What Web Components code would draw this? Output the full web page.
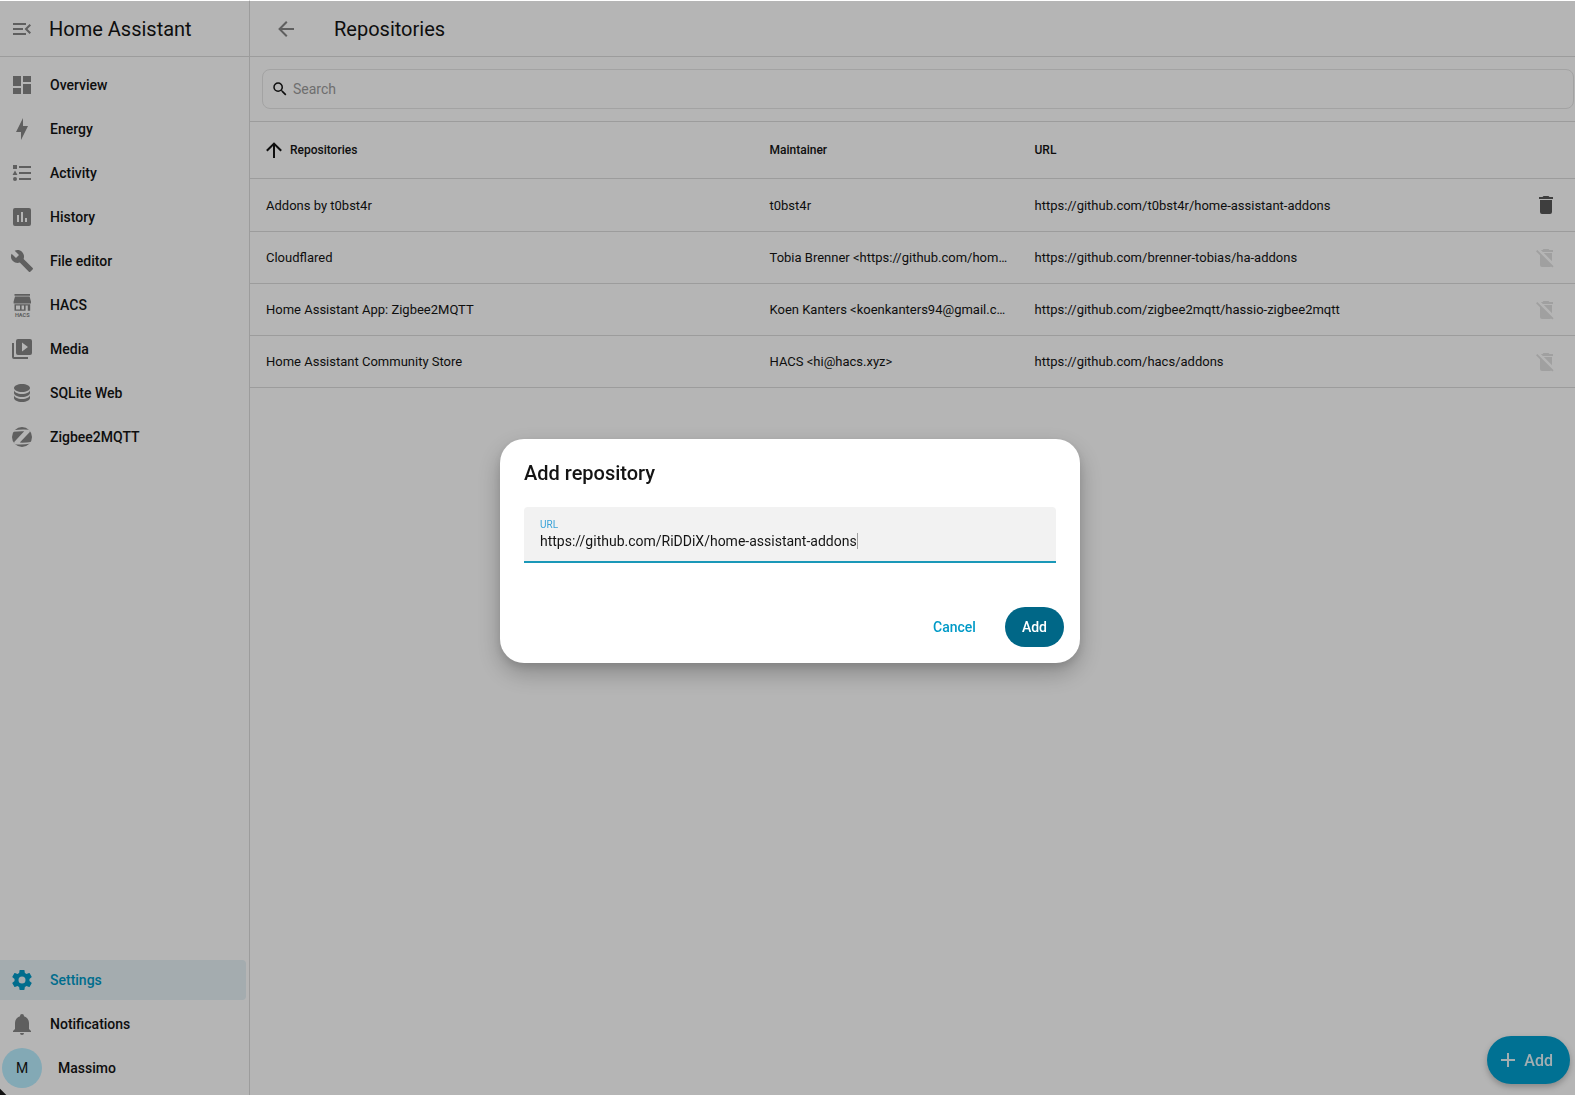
<!DOCTYPE html>
<html lang="en">
<head>
<meta charset="utf-8">
<title>Repositories</title>
<style>
  html, body {
    height: 100%;
    margin: 0;
  }
  body {
    background: #fff;
    font-family: Roboto, "Open Sans", sans-serif;
    font-size: 14px;
    color: #141414;
    --primary: #009ac7;
    --icon: #868686;
    --divider: #dcdcdc;
  }
</style>
</head>
<body>
<ha-app></ha-app>

<script>
"use strict";

const ICONS = {
  menuOpen: `<path d="M21,15.61L19.59,17L14.58,12L19.59,7L21,8.39L17.44,12L21,15.61M3,6H16V8H3V6M3,13V11H13V13H3M3,18V16H16V18H3Z"/>`,
  dashboard: `<path d="M13,3V9H21V3M13,21H21V11H13M3,21H11V15H3M3,13H11V3H3V13Z"/>`,
  bolt: `<path d="M11 15H6L13 1V9H18L11 23V15Z"/>`,
  list: `<path d="M5,9.5L7.5,14H2.5L5,9.5M3,4H7V8H3V4M5,20A2,2 0 0,0 7,18A2,2 0 0,0 5,16A2,2 0 0,0 3,18A2,2 0 0,0 5,20M9,5V7H21V5H9M9,19H21V17H9V19M9,13H21V11H9V13Z"/>`,
  chart: `<path d="M19,3H5A2,2 0 0,0 3,5V19A2,2 0 0,0 5,21H19A2,2 0 0,0 21,19V5A2,2 0 0,0 19,3M9,17H7V10H9V17M13,17H11V7H13V17M17,17H15V13H17V17Z"/>`,
  wrench: `<path d="M22.7,19L13.6,9.9C14.5,7.6 14,4.9 12.1,3C10.1,1 7.1,0.6 4.7,1.7L9,6L6,9L1.6,4.7C0.4,7.1 0.9,10.1 2.9,12.1C4.8,14 7.5,14.5 9.8,13.6L18.9,22.7C19.3,23.1 19.9,23.1 20.3,22.7L22.6,20.4C23.1,20 23.1,19.3 22.7,19Z"/>`,
  hacs: `<path fill-rule="evenodd" d="M4.5,1H20V2.8H4.5ZM5,3.5H19.6L21,8.4V10.6H3.6V8.4ZM4.5,11.2H20.2V17.8H17.8V12.6H15.6V17.8H4.5ZM6,12.6V16.4H10V12.6ZM11.6,12.6V16.4H14V12.6Z"/><text x="12.3" y="23.8" font-size="5.6" font-weight="700" text-anchor="middle">HACS</text>`,
  media: `<path d="M4,6H2V20A2,2 0 0,0 4,22H18V20H4V6M20,2A2,2 0 0,1 22,4V16A2,2 0 0,1 20,18H8A2,2 0 0,1 6,16V4A2,2 0 0,1 8,2H20M12,14.5L18,10L12,5.5V14.5Z"/>`,
  database: `<path d="M12,3C7.58,3 4,4.79 4,7C4,9.21 7.58,11 12,11C16.42,11 20,9.21 20,7C20,4.79 16.42,3 12,3M4,9V12C4,14.21 7.58,16 12,16C16.42,16 20,14.21 20,12V9C20,11.21 16.42,13 12,13C7.58,13 4,11.21 4,9M4,14V17C4,19.21 7.58,21 12,21C16.42,21 20,19.21 20,17V14C20,16.21 16.42,18 12,18C7.58,18 4,16.21 4,14Z"/>`,
  zigbee: `<mask id="z"><rect width="24" height="24" fill="#fff"/><path fill="#000" d="M3,5.2Q12,4 19.8,4.8V7L9.8,17.6Q16,17.8 21,17V18.6Q12,20 4.2,19.2V16.9L14.2,6.2Q8,6 3,6.8Z"/></mask><circle cx="12" cy="12" r="10" mask="url(#z)"/>`,
  cog: `<path d="M12,15.5A3.5,3.5 0 0,1 8.5,12A3.5,3.5 0 0,1 12,8.5A3.5,3.5 0 0,1 15.5,12A3.5,3.5 0 0,1 12,15.5M19.43,12.97C19.47,12.65 19.5,12.33 19.5,12C19.5,11.67 19.47,11.34 19.43,11L21.54,9.37C21.73,9.22 21.78,8.95 21.66,8.73L19.66,5.27C19.54,5.05 19.27,4.96 19.05,5.05L16.56,6.05C16.04,5.66 15.5,5.32 14.87,5.07L14.5,2.42C14.46,2.18 14.25,2 14,2H10C9.75,2 9.54,2.18 9.5,2.42L9.13,5.07C8.5,5.32 7.96,5.66 7.44,6.05L4.95,5.05C4.73,4.96 4.46,5.05 4.34,5.27L2.34,8.73C2.21,8.95 2.27,9.22 2.46,9.37L4.57,11C4.53,11.34 4.5,11.67 4.5,12C4.5,12.33 4.53,12.65 4.57,12.97L2.46,14.63C2.27,14.78 2.21,15.05 2.34,15.27L4.34,18.73C4.46,18.95 4.73,19.03 4.95,18.95L7.44,17.94C7.96,18.34 8.5,18.68 9.13,18.93L9.5,21.58C9.54,21.82 9.75,22 10,22H14C14.25,22 14.46,21.82 14.5,21.58L14.87,18.93C15.5,18.67 16.04,18.34 16.56,17.94L19.05,18.95C19.27,19.03 19.54,18.95 19.66,18.73L21.66,15.27C21.78,15.05 21.73,14.78 21.54,14.63L19.43,12.97Z"/>`,
  bell: `<path d="M21,19V20H3V19L5,17V11C5,7.9 7.03,5.17 10,4.29C10,4.19 10,4.1 10,4A2,2 0 0,1 12,2A2,2 0 0,1 14,4C14,4.1 14,4.19 14,4.29C16.97,5.17 19,7.9 19,11V17L21,19M14,21A2,2 0 0,1 12,23A2,2 0 0,1 10,21"/>`,
  arrowLeft: `<path d="M20,11V13H8L13.5,18.5L12.08,19.92L4.16,12L12.08,4.08L13.5,5.5L8,11H20Z"/>`,
  arrowUp: `<path d="M13,20H11V8L5.5,13.5L4.08,12.08L12,4.16L19.92,12.08L18.5,13.5L13,8V20Z"/>`,
  magnify: `<path d="M9.5,3A6.5,6.5 0 0,1 16,9.5C16,11.11 15.41,12.59 14.44,13.73L14.71,14H15.5L20.5,19L19,20.5L14,15.5V14.71L13.73,14.44C12.59,15.41 11.11,16 9.5,16A6.5,6.5 0 0,1 3,9.5A6.5,6.5 0 0,1 9.5,3M9.5,5C7,5 5,7 5,9.5C5,12 7,14 9.5,14C12,14 14,12 14,9.5C14,7 12,5 9.5,5Z"/>`,
  trash: `<path d="M19,4H15.5L14.5,3H9.5L8.5,4H5V6H19M6,19A2,2 0 0,0 8,21H16A2,2 0 0,0 18,19V7H6V19Z"/>`,
  trashOff: `<path d="M19,6V4H15.5L14.5,3H9.5L8.5,4H6.8L8.8,6H19M18,7H9.8L18,15.2V7M3.3,4L2,5.3L6,9.3V19A2,2 0 0,0 8,21H16C16.5,21 16.9,20.8 17.2,20.5L18.3,21.6L19.6,20.3L3.3,4Z"/>`,
  plus: `<path d="M19,13H13V19H11V13H5V11H11V5H13V11H19V13Z"/>`,
};

// Attaches an open shadow root filled with the given markup
const render = (element, html) => {
  const template = document.createElement("template");
  template.innerHTML = html;
  const root = element.attachShadow({ mode: "open" });
  root.appendChild(template.content.cloneNode(true));
  return root;
};

customElements.define(
  "ha-icon",
  class Icon extends HTMLElement {
    connectedCallback() {
      if (this.shadowRoot) return;
      render(this, `
      <style>
      :host {
        display: block;
        flex: none;
        width: var(--icon-size, 24px);
        height: var(--icon-size, 24px);
      }
      svg {
        display: block;
        width: 100%;
        height: 100%;
        fill: currentColor;
      }
      </style>
      <svg viewBox="0 0 24 24" aria-hidden="true">${ICONS[this.getAttribute("name")]}</svg>`);
    }
  }
);

customElements.define(
  "ha-sidebar-item",
  class SidebarItem extends HTMLElement {
    constructor() {
      super();
      render(this, `
      <style>
      :host {
        display: block;
      }
      a {
        display: flex;
        align-items: center;
        gap: 16px;
        height: 40px;
        padding-left: 10px;
        border-radius: 0 4px 4px 0;
        color: inherit;
        font-weight: 500;
        text-decoration: none;
      }
      ::slotted(ha-icon) {
        color: var(--icon);
      }
      :host([selected]) a {
        background: #e7f2f7;
        color: var(--primary);
      }
      :host([selected]) ::slotted(ha-icon) {
        color: var(--primary);
      }
      :host([user]) a {
        padding-left: 2px;
      }
      </style>
      <a href="#"><slot name="start"></slot><slot></slot></a>`);
    }
  }
);

customElements.define(
  "ha-avatar",
  class Avatar extends HTMLElement {
    constructor() {
      super();
      render(this, `
      <style>
      :host {
        display: flex;
        align-items: center;
        justify-content: center;
        width: 40px;
        height: 40px;
        border-radius: 50%;
        background: #b9eeff;
        font-weight: 400;
      }
      </style>
      <slot></slot>`);
    }
  }
);

customElements.define(
  "ha-sidebar",
  class Sidebar extends HTMLElement {
    constructor() {
      super();
      const items = [
        ["dashboard", "Overview"],
        ["bolt", "Energy"],
        ["list", "Activity"],
        ["chart", "History"],
        ["wrench", "File editor"],
        ["hacs", "HACS"],
        ["media", "Media"],
        ["database", "SQLite Web"],
        ["zigbee", "Zigbee2MQTT"],
      ];
      render(this, `
      <style>
      :host {
        display: flex;
        flex-direction: column;
        flex: none;
        box-sizing: border-box;
        width: 250px;
        border-right: 1px solid var(--divider);
      }
      header {
        display: flex;
        align-items: center;
        gap: 15px;
        box-sizing: border-box;
        height: 57px;
        padding: 2px 10px 0;
        border-bottom: 1px solid var(--divider);
        font-size: 20px;
      }
      button {
        padding: 0;
        border: 0;
        background: none;
        color: var(--icon);
      }
      nav {
        display: flex;
        flex: 1;
        flex-direction: column;
        gap: 4px;
        padding: 8px 3px 7px 0;
      }
      .spacer {
        flex: 1;
      }
      </style>
      <header>
        <button type="button" aria-label="Sidebar toggle"><ha-icon name="menuOpen"></ha-icon></button>
        Home Assistant
      </header>
      <nav>
        ${items.map(([icon, label]) => `
        <ha-sidebar-item><ha-icon slot="start" name="${icon}"></ha-icon>${label}</ha-sidebar-item>`).join("")}
        <div class="spacer"></div>
        <ha-sidebar-item selected><ha-icon slot="start" name="cog"></ha-icon>Settings</ha-sidebar-item>
        <ha-sidebar-item><ha-icon slot="start" name="bell"></ha-icon>Notifications</ha-sidebar-item>
        <ha-sidebar-item user><ha-avatar slot="start">M</ha-avatar>Massimo</ha-sidebar-item>
      </nav>`);
    }
  }
);

customElements.define(
  "ha-search",
  class Search extends HTMLElement {
    constructor() {
      super();
      render(this, `
      <style>
      :host {
        display: block;
        padding: 12px 1px 12px 12px;
        border-bottom: 1px solid var(--divider);
      }
      label {
        display: flex;
        align-items: center;
        gap: 4px;
        box-sizing: border-box;
        height: 40px;
        padding: 0 8px;
        border: 1px solid #e6e6e6;
        border-radius: 8px;
        --icon-size: 18px;
      }
      input {
        flex: 1;
        padding: 0;
        border: 0;
        outline: 0;
        background: none;
        font: inherit;
      }
      input::placeholder {
        color: #9c9c9c;
      }
      </style>
      <label><ha-icon name="magnify"></ha-icon><input type="text" placeholder="Search" aria-label="Search"></label>`);
    }
  }
);

customElements.define(
  "ha-repository-table",
  class RepositoryTable extends HTMLElement {
    constructor() {
      super();
      this.root = render(this, `
      <style>
      :host {
        display: block;
      }
      table {
        width: 100%;
        border-collapse: separate;
        border-spacing: 0;
        table-layout: fixed;
        font-size: 13px;
      }
      th, td {
        box-sizing: border-box;
        height: 52px;
        padding: 0 8px 0 16px;
        overflow: hidden;
        border-bottom: 1px solid var(--divider);
        text-align: left;
        text-overflow: ellipsis;
        white-space: nowrap;
      }
      th {
        height: 57px;
        font-size: 12px;
        font-weight: 500;
      }
      tbody tr:first-child td {
        height: 53px;
      }
      .name { width: 38%; }
      .maintainer { width: 20%; }
      .action { width: 58px; }
      .sort {
        display: flex;
        align-items: center;
        gap: 4px;
        margin-left: -4px;
      }
      th button, td button {
        display: block;
        padding: 0;
        border: 0;
        background: none;
        color: #585858;
        font: inherit;
      }
      th button {
        color: inherit;
      }
      td:last-child {
        padding: 0 17px;
      }
      button:disabled {
        color: #e2e2e2;
      }
      </style>
      <table>
        <thead>
          <tr>
            <th class="name"><button type="button" class="sort"><ha-icon name="arrowUp"></ha-icon>Repositories</button></th>
            <th class="maintainer">Maintainer</th>
            <th>URL</th>
            <th class="action"></th>
          </tr>
        </thead>
        <tbody></tbody>
      </table>`);
    }

    set repositories(list) {
      const body = this.root.querySelector("tbody");
      for (const { name, maintainer, url, used } of list) {
        const row = body.insertRow();
        for (const text of [name, maintainer, url]) {
          row.insertCell().textContent = text;
        }
        row.insertCell().innerHTML = `
          <button type="button" aria-label="Remove" ${used ? "disabled" : ""}>
            <ha-icon name="${used ? "trashOff" : "trash"}"></ha-icon>
          </button>`;
      }
    }
  }
);

customElements.define(
  "ha-button",
  class Button extends HTMLElement {
    constructor() {
      super();
      render(this, `
      <style>
      :host {
        display: block;
      }
      button {
        display: flex;
        align-items: center;
        height: 40px;
        padding: 0 17px;
        border: 0;
        border-radius: 20px;
        background: none;
        color: var(--primary);
        font: inherit;
        font-weight: 500;
      }
      :host([filled]) button {
        background: #006787;
        color: #fff;
      }
      :host([fab]) button {
        gap: 4px;
        height: 48px;
        padding: 0 17px 0 9px;
        border-radius: 24px;
        background: #00a0d0;
        box-shadow: 0 3px 6px rgba(0, 0, 0, 0.25);
        color: #e6f5fa;
        font-size: 16px;
      }
      </style>
      <button type="button"><slot></slot></button>`);
    }
  }
);

customElements.define(
  "ha-text-field",
  class TextField extends HTMLElement {
    connectedCallback() {
      if (this.shadowRoot) return;
      render(this, `
      <style>
      :host {
        display: flex;
        flex-direction: column;
        box-sizing: border-box;
        height: 56px;
        padding: 11px 16px 0;
        border-bottom: 2px solid #1a98b8;
        border-radius: 4px 4px 0 0;
        background: #f2f2f2;
      }
      label {
        color: #3aa3d8;
        font-size: 10px;
        line-height: 14px;
      }
      .value {
        display: flex;
        align-items: center;
      }
      input {
        field-sizing: content;
        padding: 0;
        border: 0;
        outline: 0;
        background: none;
        color: inherit;
        font: inherit;
        line-height: 18px;
      }
      .caret {
        width: 1px;
        height: 16px;
        background: #a0a0a0;
      }
      </style>
      <label for="field">${this.getAttribute("label")}</label>
      <div class="value"><input id="field" type="text" value="${this.getAttribute("value")}"><span class="caret"></span></div>`);
    }
  }
);

customElements.define(
  "ha-dialog",
  class Dialog extends HTMLElement {
    constructor() {
      super();
      render(this, `
      <style>
      :host {
        position: fixed;
        inset: 1px 0 0;
        display: flex;
        align-items: center;
        justify-content: center;
        padding: 6px 0 0 5px;
        background:
          linear-gradient(45deg, #111 4px, transparent 5px),
          rgba(0, 0, 0, 0.29);
      }
      section {
        box-sizing: border-box;
        width: 580px;
        max-width: 95%;
        padding: 20px 16px 16px;
        border-radius: 24px;
        background: #fff;
        box-shadow: 0 10px 24px rgba(0, 0, 0, 0.25), 0 4px 8px rgba(0, 0, 0, 0.1);
      }
      h2 {
        margin: 0 8px 20px;
        font-size: 20px;
        font-weight: 500;
        line-height: 28px;
      }
      .content {
        padding: 0 8px;
      }
      footer {
        display: flex;
        justify-content: flex-end;
        gap: 12px;
        margin-top: 44px;
      }
      </style>
      <section role="dialog" aria-labelledby="title">
        <h2 id="title"><slot name="heading"></slot></h2>
        <div class="content"><slot></slot></div>
        <footer><slot name="actions"></slot></footer>
      </section>`);
    }
  }
);

customElements.define(
  "ha-app",
  class App extends HTMLElement {
    constructor() {
      super();
      const root = render(this, `
      <style>
      :host {
        display: flex;
        min-height: 100%;
      }
      main {
        display: flex;
        flex: 1;
        flex-direction: column;
        min-width: 0;
      }
      header {
        display: flex;
        align-items: center;
        gap: 36px;
        box-sizing: border-box;
        height: 57px;
        padding: 2px 24px 0;
        border-bottom: 1px solid var(--divider);
      }
      header button {
        padding: 0;
        border: 0;
        background: none;
        color: var(--icon);
      }
      h1 {
        margin: 0;
        font-size: 20px;
        font-weight: 400;
      }
      .fab {
        position: fixed;
        right: 5px;
        bottom: 11px;
      }
      </style>
      <ha-sidebar></ha-sidebar>
      <main>
        <header>
          <button type="button" aria-label="Back"><ha-icon name="arrowLeft"></ha-icon></button>
          <h1>Repositories</h1>
        </header>
        <ha-search></ha-search>
        <ha-repository-table></ha-repository-table>
      </main>
      <ha-button class="fab" fab><ha-icon name="plus"></ha-icon>Add</ha-button>
      <ha-dialog>
        <span slot="heading">Add repository</span>
        <ha-text-field label="URL" value="https://github.com/RiDDiX/home-assistant-addons"></ha-text-field>
        <ha-button slot="actions">Cancel</ha-button>
        <ha-button slot="actions" filled>Add</ha-button>
      </ha-dialog>`);
      customElements.upgrade(root);
      root.querySelector("ha-repository-table").repositories = [
        {
          name: "Addons by t0bst4r",
          maintainer: "t0bst4r",
          url: "https://github.com/t0bst4r/home-assistant-addons",
          used: false,
        },
        {
          name: "Cloudflared",
          maintainer: "Tobia Brenner <https://github.com/hom…",
          url: "https://github.com/brenner-tobias/ha-addons",
          used: true,
        },
        {
          name: "Home Assistant App: Zigbee2MQTT",
          maintainer: "Koen Kanters <koenkanters94@gmail.c…",
          url: "https://github.com/zigbee2mqtt/hassio-zigbee2mqtt",
          used: true,
        },
        {
          name: "Home Assistant Community Store",
          maintainer: "HACS <hi@hacs.xyz>",
          url: "https://github.com/hacs/addons",
          used: true,
        },
      ];
    }
  }
);
</script>
</body>
</html>
